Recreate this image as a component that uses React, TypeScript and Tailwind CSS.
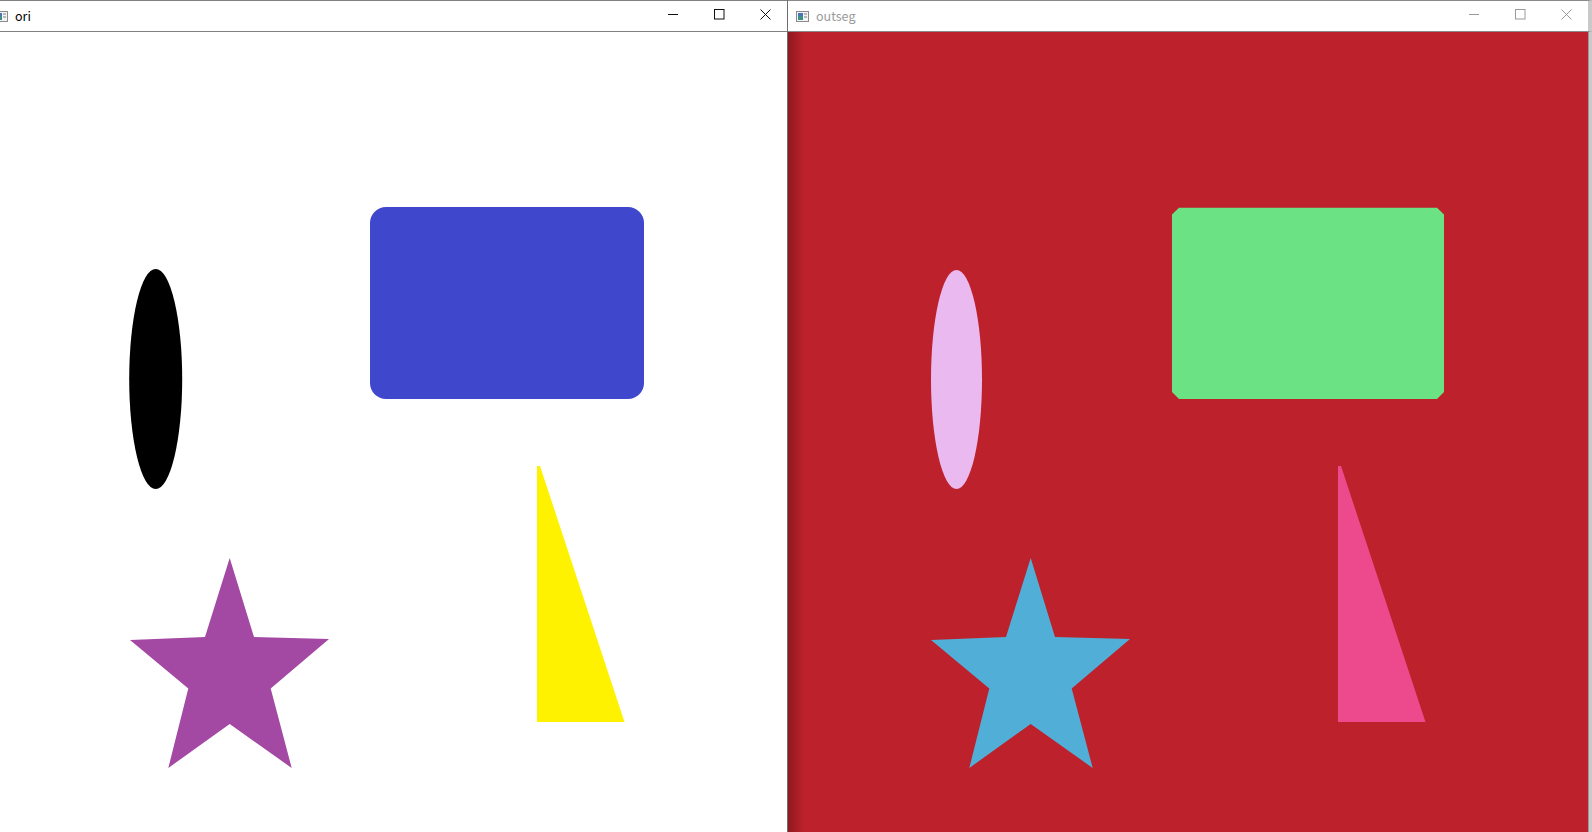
import React from 'react';

const starPts = (dx: number) =>
  [
    [229.7, 558],
    [254, 637],
    [329, 639],
    [270.7, 688.5],
    [291.7, 768],
    [229.7, 724],
    [168.3, 768],
    [188.3, 688.5],
    [130, 640],
    [205, 637],
  ]
    .map(([x, y]) => `${x + dx},${y}`)
    .join(' ');

const triPts = (dx: number) =>
  [
    [537, 466],
    [540, 466],
    [624.5, 722],
    [537, 722],
  ]
    .map(([x, y]) => `${x + dx},${y}`)
    .join(' ');

function WinIcon() {
  return (
    <svg width="13" height="11" viewBox="0 0 13 11" className="shrink-0">
      <rect x="0.5" y="0.5" width="12" height="10" fill="#f4f4f4" stroke="#8a8a8a" />
      <rect x="2" y="2" width="5" height="7" fill="#3d8f8a" />
      <rect x="2" y="2" width="5" height="3" fill="#4a73b8" />
      <rect x="8" y="2" width="3" height="2" fill="#b9b9b9" />
      <rect x="8" y="5" width="3" height="2" fill="#b9b9b9" />
    </svg>
  );
}

function Controls({ color }: { color: string }) {
  return (
    <div className="flex items-center h-full">
      <svg width="11" height="11" viewBox="0 0 11 11" className="mr-[35px]">
        <line x1="0" y1="5.5" x2="10" y2="5.5" stroke={color} strokeWidth="1" />
      </svg>
      <svg width="11" height="11" viewBox="0 0 11 11" className="mr-[35px]">
        <rect x="0.5" y="0.5" width="9.5" height="9.5" fill="none" stroke={color} strokeWidth="1" />
      </svg>
      <svg width="11" height="11" viewBox="0 0 11 11">
        <line x1="0.5" y1="0.5" x2="10.5" y2="10.5" stroke={color} strokeWidth="1" />
        <line x1="10.5" y1="0.5" x2="0.5" y2="10.5" stroke={color} strokeWidth="1" />
      </svg>
    </div>
  );
}

export default function App() {
  return (
    <div
      className="w-[1592px] h-[832px] flex overflow-hidden bg-white"
      style={{ fontFamily: '"Noto Sans CJK SC", "Liberation Sans", sans-serif' }}
    >
      {/* left window: ori */}
      <div className="w-[788px] h-full flex flex-col border-r border-[#6f6f6f] shrink-0">
        <div className="h-[32px] flex items-center justify-between border-t border-b border-[#808080] bg-white shrink-0">
          <div className="flex items-center gap-[7px] -ml-[5px]">
            <WinIcon />
            <span className="text-[12.5px] text-black leading-none">ori</span>
          </div>
          <div className="pr-[16px] -mt-[4px]">
            <Controls color="#111" />
          </div>
        </div>
        <div className="flex-1 relative bg-white">
          <svg className="absolute inset-0" width="787" height="800" viewBox="0 32 787 800">
            <ellipse cx="155.7" cy="379" rx="26.5" ry="110" fill="#000" />
            <rect x="370" y="207" width="274" height="192" rx="16" fill="#3f48cc" />
            <polygon points={starPts(0)} fill="#a349a4" />
            <polygon points={triPts(0)} fill="#fff200" />
          </svg>
        </div>
      </div>

      {/* right window: outseg */}
      <div className="flex-1 h-full flex flex-col">
        <div className="h-[32px] flex items-center justify-between border-t border-b border-[#8a8a8a] bg-white shrink-0 border-r-[4px] border-r-[#c9c9c9]">
          <div className="flex items-center gap-[7px] pl-[8px]">
            <WinIcon />
            <span className="text-[12.5px] text-[#9a9a9a] leading-none">outseg</span>
          </div>
          <div className="pr-[16px] -mt-[4px]">
            <Controls color="#9a9a9a" />
          </div>
        </div>
        <div className="flex-1 flex">
          <div className="flex-1 relative bg-[#bd212b]">
            <div className="absolute inset-y-0 left-0 w-[16px] bg-gradient-to-r from-black/25 to-transparent" />
            <svg className="absolute inset-0" width="800" height="800" viewBox="788 32 800 800">
              <ellipse cx="956.5" cy="379.5" rx="25.5" ry="109.5" fill="#eab9ef" />
              <polygon
                points="1179,207.7 1437,207.7 1444,214.5 1444,392 1437,399 1179,399 1172,392 1172,214.5"
                fill="#6be284"
              />
              <polygon points={starPts(801)} fill="#51afd7" />
              <polygon points={triPts(801)} fill="#ec4a8c" />
            </svg>
          </div>
          <div className="w-[4px] bg-[#cacaca] border-l border-[#9a9a9a]" />
        </div>
      </div>
    </div>
  );
}
